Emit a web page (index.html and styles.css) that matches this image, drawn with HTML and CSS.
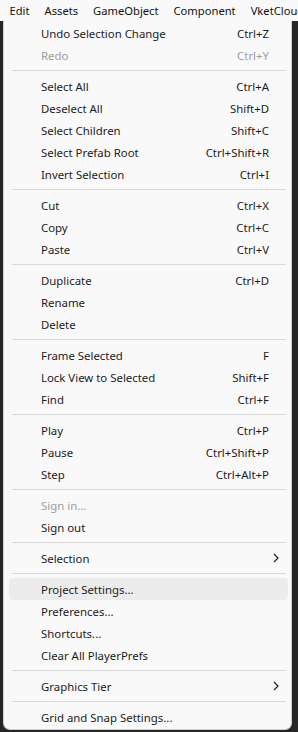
FILE: index.html
```html
<!DOCTYPE html>
<html>
<head>
<meta charset="utf-8">
<link rel="stylesheet" href="styles.css">
</head>
<body>
<div class="menubar">
  <span class="mb-item">Edit</span>
  <span class="mb-item">Assets</span>
  <span class="mb-item">GameObject</span>
  <span class="mb-item">Component</span>
  <span class="mb-item">VketCloud</span>
</div>
<div class="stage">
  <div class="menu">
    <div class="item"><span class="label">Undo Selection Change</span><span class="key">Ctrl+Z</span></div>
    <div class="item disabled"><span class="label">Redo</span><span class="key">Ctrl+Y</span></div>
    <div class="sep"></div>
    <div class="item"><span class="label">Select All</span><span class="key">Ctrl+A</span></div>
    <div class="item"><span class="label">Deselect All</span><span class="key">Shift+D</span></div>
    <div class="item"><span class="label">Select Children</span><span class="key">Shift+C</span></div>
    <div class="item"><span class="label">Select Prefab Root</span><span class="key">Ctrl+Shift+R</span></div>
    <div class="item"><span class="label">Invert Selection</span><span class="key">Ctrl+I</span></div>
    <div class="sep"></div>
    <div class="item"><span class="label">Cut</span><span class="key">Ctrl+X</span></div>
    <div class="item"><span class="label">Copy</span><span class="key">Ctrl+C</span></div>
    <div class="item"><span class="label">Paste</span><span class="key">Ctrl+V</span></div>
    <div class="sep"></div>
    <div class="item"><span class="label">Duplicate</span><span class="key">Ctrl+D</span></div>
    <div class="item"><span class="label">Rename</span></div>
    <div class="item"><span class="label">Delete</span></div>
    <div class="sep"></div>
    <div class="item"><span class="label">Frame Selected</span><span class="key">F</span></div>
    <div class="item"><span class="label">Lock View to Selected</span><span class="key">Shift+F</span></div>
    <div class="item"><span class="label">Find</span><span class="key">Ctrl+F</span></div>
    <div class="sep"></div>
    <div class="item"><span class="label">Play</span><span class="key">Ctrl+P</span></div>
    <div class="item"><span class="label">Pause</span><span class="key">Ctrl+Shift+P</span></div>
    <div class="item"><span class="label">Step</span><span class="key">Ctrl+Alt+P</span></div>
    <div class="sep"></div>
    <div class="item disabled"><span class="label">Sign in...</span></div>
    <div class="item"><span class="label">Sign out</span></div>
    <div class="sep"></div>
    <div class="item"><span class="label">Selection</span><svg class="chev" width="6" height="10" viewBox="0 0 6 10"><path d="M1 1 L5 5 L1 9" fill="none" stroke="#222" stroke-width="1.2"/></svg></div>
    <div class="sep"></div>
    <div class="item hover"><span class="label">Project Settings...</span></div>
    <div class="item"><span class="label">Preferences...</span></div>
    <div class="item"><span class="label">Shortcuts...</span></div>
    <div class="item"><span class="label">Clear All PlayerPrefs</span></div>
    <div class="sep"></div>
    <div class="item"><span class="label">Graphics Tier</span><svg class="chev" width="6" height="10" viewBox="0 0 6 10"><path d="M1 1 L5 5 L1 9" fill="none" stroke="#222" stroke-width="1.2"/></svg></div>
    <div class="sep"></div>
    <div class="item"><span class="label">Grid and Snap Settings...</span></div>
  </div>
</div>
</body>
</html>
```

FILE: styles.css
```css
html, body {
  margin: 0;
  padding: 0;
}
body {
  background: #262626;
  font-family: "Noto Sans", "Open Sans", sans-serif;
  font-size: 11.4px;
  color: #1b1b1b;
  width: 298px;
  height: 732px;
  overflow: hidden;
}
.menubar {
  height: 21px;
  background: #f9f9f9;
  display: flex;
  align-items: center;
  white-space: nowrap;
  overflow: hidden;
  padding-left: 2px;
}
.mb-item {
  padding: 0 7.5px;
  color: #111;
  font-size: 11.2px;
}
.stage {
  padding-left: 3px;
}
.menu {
  width: 289px;
  height: 709px;
  box-sizing: border-box;
  background: #f9f9f9;
  border: 1px solid #cfcfcf;
  border-top: none;
  border-radius: 0 0 7px 7px;
  padding: 1px 0 0 0;
}
.item {
  height: 22px;
  display: flex;
  align-items: center;
  margin: 0 3px 0 5px;
  padding-left: 32px;
  padding-right: 19px;
  border-radius: 4px;
  white-space: nowrap;
}
.item .label {
  flex: 1;
}
.item .key {
  text-align: right;
}
.item.disabled {
  color: #9d9d9d;
}
.item.hover {
  background: #ececec;
}
.chev {
  margin-right: -10px;
}
.sep {
  height: 1px;
  background: #d9d9d9;
  margin: 4px 5px 4px 8px;
}
```
